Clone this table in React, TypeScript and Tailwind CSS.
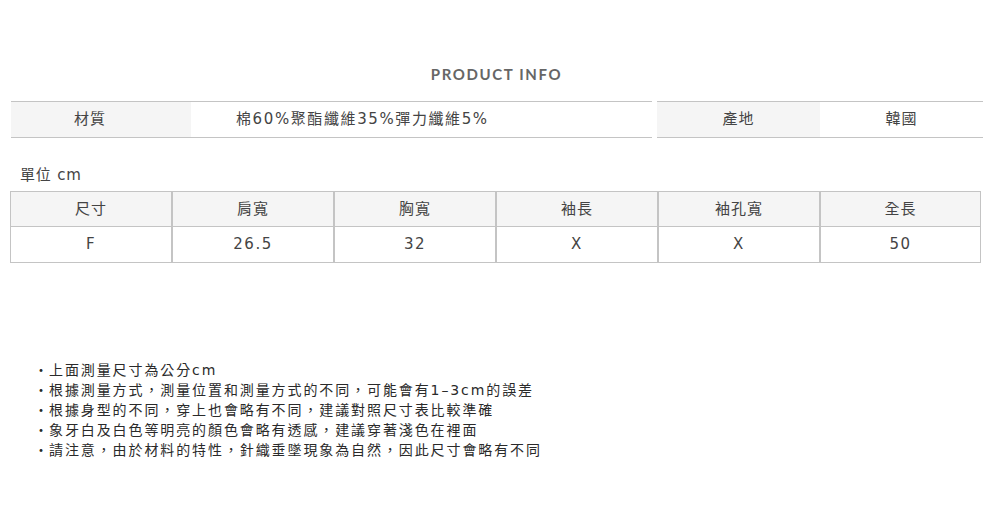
import React from 'react';

const cjk = "font-['DejaVu_Sans','Noto_Sans_CJK_TC',sans-serif]";

const headers = ['尺寸', '肩寬', '胸寬', '袖長', '袖孔寬', '全長'];
const values = ['F', '26.5', '32', 'X', 'X', '50'];

const notes = [
  '上面測量尺寸為公分cm',
  '根據測量方式，測量位置和測量方式的不同，可能會有1–3cm的誤差',
  '根據身型的不同，穿上也會略有不同，建議對照尺寸表比較準確',
  '象牙白及白色等明亮的顏色會略有透感，建議穿著淺色在裡面',
  '請注意，由於材料的特性，針織垂墜現象為自然，因此尺寸會略有不同',
];

export default function App() {
  return (
    <div className={`w-[993px] h-[522px] bg-white text-[#444] ${cjk}`}>
      <div className="pt-[64px] text-center">
        <h1 className="font-['Lato',sans-serif] font-bold text-[15px] leading-[20px] tracking-[1.6px] text-[#666]">PRODUCT INFO</h1>
      </div>

      <div className="mt-[17px] flex pl-[11px] pr-[10px] gap-[5px]">
        <div className="flex w-[641px] h-[37px] border-y border-[#c4c4c4]">
          <div className="w-[180px] bg-[#f5f5f5] flex items-center justify-center pr-[22px] text-[15px] tracking-[1px]">材質</div>
          <div className="flex-1 flex items-center pl-[45px] text-[15px] tracking-[1.6px]">棉60%聚酯纖維35%彈力纖維5%</div>
        </div>
        <div className="flex flex-1 h-[37px] border-y border-[#c4c4c4]">
          <div className="w-[163px] bg-[#f5f5f5] flex items-center justify-center text-[15px] tracking-[1px]">產地</div>
          <div className="flex-1 flex items-center justify-center text-[15px] tracking-[1px]">韓國</div>
        </div>
      </div>

      <div className="mt-[27px] pl-[20px] text-[15px] leading-[20px] tracking-[0.8px]">單位 cm</div>

      <div className="mt-[6px] ml-[10px] w-[971px] border border-[#c4c4c4]">
        <div className="grid grid-cols-[160px_162px_162px_162px_162px_1fr] h-[35px] bg-[#f5f5f5] border-b border-[#c4c4c4]">
          {headers.map((h, i) => (
            <div key={h} className={`flex items-center justify-center text-[15px] tracking-[1px] ${i > 0 ? 'border-l-2 border-[#c4c4c4]' : ''}`}>{h}</div>
          ))}
        </div>
        <div className="grid grid-cols-[160px_162px_162px_162px_162px_1fr] h-[35px]">
          {values.map((v, i) => (
            <div key={i} className={`flex items-center justify-center text-[15px] tracking-[1.5px] ${i > 0 ? 'border-l-2 border-[#c4c4c4]' : ''}`}>{v}</div>
          ))}
        </div>
      </div>

      <ul className="mt-[97px] pl-[33px] text-[14px] leading-[20px] text-[#2a2a2a] tracking-[1.9px]">
        {notes.map((n) => (
          <li key={n} className="flex">
            <span className="w-[16px] text-center tracking-normal">・</span>
            <span>{n}</span>
          </li>
        ))}
      </ul>
    </div>
  );
}
